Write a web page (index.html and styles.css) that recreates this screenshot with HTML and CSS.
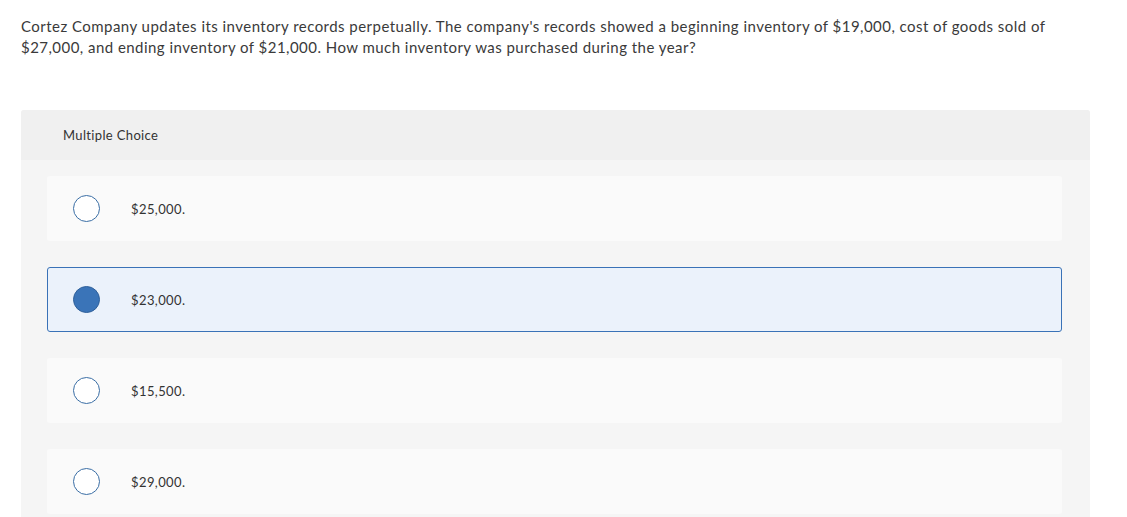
FILE: index.html
```html
<!DOCTYPE html>
<html>
<head>
<meta charset="utf-8">
<link rel="stylesheet" href="styles.css">
</head>
<body>
<div class="page">
  <p class="question">Cortez Company updates its inventory records perpetually. The company's records showed a beginning inventory of $19,000, cost of goods sold of $27,000, and ending inventory of $21,000. How much inventory was purchased during the year?</p>
  <div class="panel">
    <div class="panel-head">Multiple Choice</div>
    <div class="panel-body">
      <div class="option"><span class="radio"></span><span class="label">$25,000.</span></div>
      <div class="option selected"><span class="radio"></span><span class="label">$23,000.</span></div>
      <div class="option"><span class="radio"></span><span class="label">$15,500.</span></div>
      <div class="option"><span class="radio"></span><span class="label">$29,000.</span></div>
    </div>
  </div>
</div>
</body>
</html>
```
FILE: styles.css
```css
html, body { margin: 0; padding: 0; background: #fff; }
body { font-family: Lato, "Open Sans", sans-serif; color: #333; }
.page { padding: 16px 37px 0 21px; }
.question {
  margin: 0;
  font-size: 15px;
  line-height: 21px;
  letter-spacing: 0.46px;
  color: #3a3a3a;
}
.panel {
  margin-top: 52px;
  background: #f5f5f5;
  border-radius: 3px 3px 0 0;
  overflow: hidden;
}
.panel-head {
  height: 50px;
  background: #f0f0f0;
  display: flex;
  align-items: center;
  padding-left: 42px;
  font-size: 13px;
  letter-spacing: 0.35px;
  color: #333;
}
.panel-body {
  padding: 16px 28px 10px 26px;
  display: flex;
  flex-direction: column;
  gap: 26px;
}
.option {
  height: 65px;
  box-sizing: border-box;
  background: #fafafa;
  border-radius: 3px;
  display: flex;
  align-items: center;
  padding-left: 25px;
  border: 1px solid transparent;
}
.option.selected {
  background: #ebf2fb;
  border-color: #3a72b7;
}
.radio {
  width: 27px;
  height: 27px;
  box-sizing: border-box;
  border: 1px solid #3a6ea5;
  border-radius: 50%;
  background: #fff;
  flex: none;
}
.selected .radio {
  background: #3a74b8;
  border-color: #2f609a;
}
.label {
  margin-left: 31px;
  font-size: 13px;
  letter-spacing: 0.4px;
  color: #333;
}
```
